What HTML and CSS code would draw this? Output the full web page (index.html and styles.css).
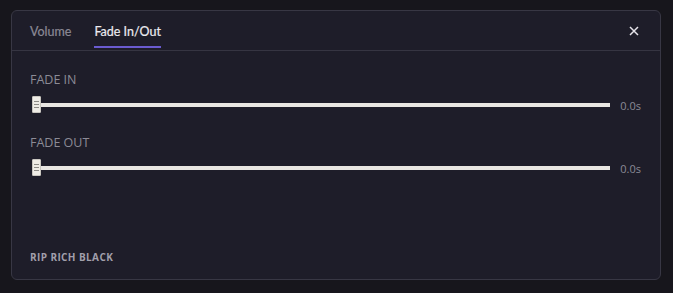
FILE: index.html
```html
<!DOCTYPE html>
<html>
<head>
    <title>Fade In/Out</title>
    <meta name="viewport" content="width=device-width, initial-scale=1.0">
    <link rel="stylesheet" href="styles.css">
</head>
<body>
    <div class="panel">
        <div class="tabs">
            <span class="tab">Volume</span>
            <span class="tab active">Fade In/Out</span>
            <button class="close" aria-label="Fechar">
                <svg width="10" height="10" viewBox="0 0 10 10"><path d="M1 1L9 9M9 1L1 9" stroke="#e6e4ea" stroke-width="1.5" fill="none"/></svg>
            </button>
        </div>

        <div class="content">
            <div class="field">
                <div class="label">FADE IN</div>
                <div class="slider-row">
                    <div class="track"><span class="thumb"><i></i><i></i><i></i></span></div>
                    <span class="value">0.0s</span>
                </div>
            </div>
            <div class="field">
                <div class="label">FADE OUT</div>
                <div class="slider-row">
                    <div class="track"><span class="thumb"><i></i><i></i><i></i></span></div>
                    <span class="value">0.0s</span>
                </div>
            </div>
        </div>

        <div class="footer">RIP RICH BLACK</div>
    </div>
</body>
</html>
```

FILE: styles.css
```css
body {margin: 0; background-color: #17161c; font-family: "Open Sans", "Noto Sans", sans-serif; height: 293px;}
.panel {margin: 10px 12px 0 11px; height: 268px; border: 1px solid #383744; border-radius: 6px; background-color: #1e1d29; display: flex; flex-direction: column;}
.tabs {height: 39px; border-bottom: 1px solid #363542; display: flex; align-items: stretch; padding: 0 18px; gap: 23px;}
.tab {font-family: Lato, "Open Sans", sans-serif; font-size: 12.5px; color: #8b8995; display: flex; align-items: center; padding-top: 6px; border-bottom: 2px solid transparent; margin-bottom: 2px; -webkit-text-stroke: 0.2px currentColor;}
.tab.active {color: #ecebf0; border-bottom-color: #6a5bd0;}
.close {margin-left: auto; background: none; border: 0; padding: 0; display: flex; align-items: center; margin-right: 3px; cursor: pointer;}
.content {padding: 21px 19px 0 18px; display: flex; flex-direction: column; gap: 21px;}
.label {font-size: 12.5px; color: #8c8b96; line-height: 16px;}
.slider-row {display: flex; align-items: center; height: 18px; margin-top: 8px;}
.track {flex: 1; height: 4px; background-color: #e9e6e2; position: relative; margin-left: 5px;}
.thumb {position: absolute; left: -3px; top: -7px; width: 9px; height: 17px; box-sizing: border-box; background-color: #efece6; border: 1px solid #c9c6c0; border-radius: 1px; display: flex; flex-direction: column; justify-content: center; align-items: center; gap: 2px;}
.thumb i {display: block; width: 5px; height: 1px; background-color: #8d8b86;}
.value {width: 31px; text-align: right; font-size: 11px; color: #8b8a96;}
.footer {margin-top: auto; padding: 0 18px 15px 18px; font-size: 10px; font-weight: bold; letter-spacing: 0.4px; color: #a19fab;}
```
